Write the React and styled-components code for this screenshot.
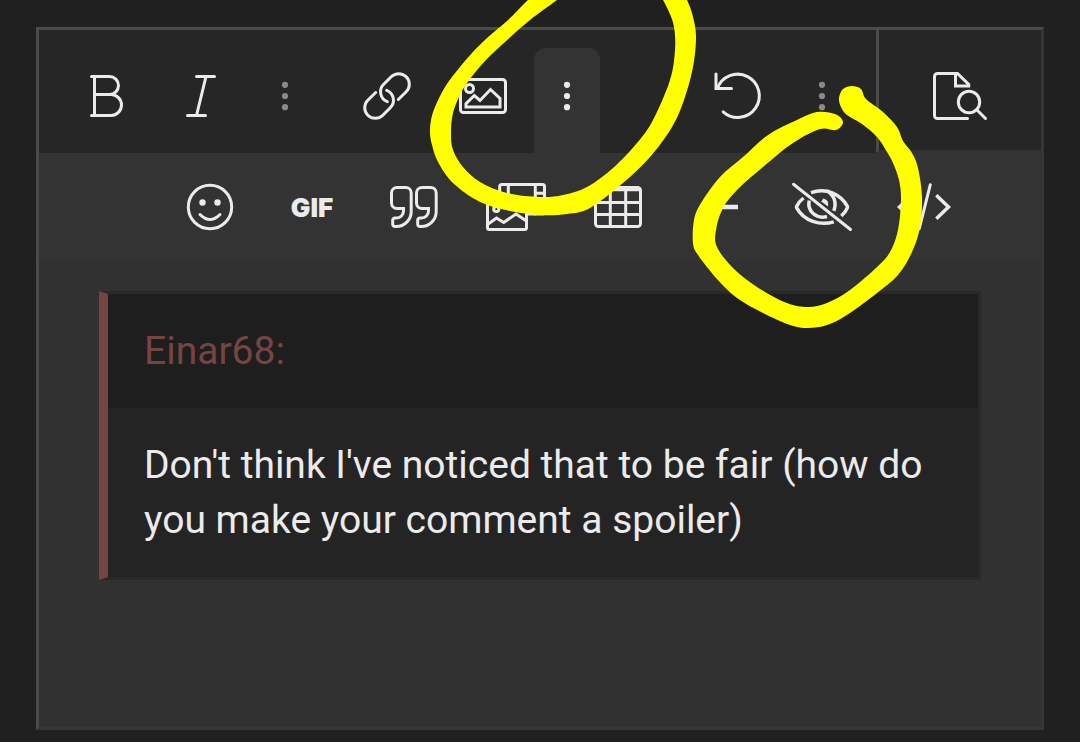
import React from "react"
import styled, { createGlobalStyle } from "styled-components"

const colors = {
  page: "#202020",
  toolbar: "#262626",
  raised: "#333333",
  content: "#313131",
  borderLight: "#4b4b4b",
  borderHeavy: "#363636",
  icon: "#ebebeb",
  muted: "#8a8a8a",
  accent: "#774541",
  marker: "#ffff00",
}

export default function App() {
  return (
    <Page>
      <GlobalStyle />
      <Editor>
        <Toolbar role="toolbar" aria-label="Formatting">
          <Group>
            <ToolButton label="Bold">
              <path d="M-13.5 -19.5H4.5A9 9 0 0 1 4.5 -1.5H-10.5M4.5 -1.5H6A10.5 10.5 0 0 1 6 19.5H-13.5M-10.5 -19.5V19.5" />
            </ToolButton>
            <ToolButton label="Italic">
              <path d="M-4.5 -19.5H13.5M-13.5 19.5H4.5M5 -19.5L-4.5 19.5" />
            </ToolButton>
            <MoreButton label="More text options" muted />
          </Group>
          <Group>
            <ToolButton label="Insert link">
              <path d="M-11.3 -3.5L-19.2 4.2A10.6 10.6 0 0 0 -4.2 19.2L3.3 11.7A10.6 10.6 0 0 0 -0.3 -5.7" />
              <path d="M11.3 3.5L19.2 -4.2A10.6 10.6 0 0 0 4.2 -19.2L-3.3 -11.7A10.6 10.6 0 0 0 0.3 5.7" />
            </ToolButton>
            <ToolButton label="Insert image">
              <rect x="-22.5" y="-16.5" width="45" height="33" rx="3" />
              <circle cx="-13.5" cy="-7.5" r="4" />
              <path d="M-17 11V7.7L-8.7 -0.5L-3 4.5L7.5 -6.5L17 2.5V11Z" />
            </ToolButton>
            <MoreButton label="More rich options" active />
          </Group>
          <Group $end>
            <ToolButton label="Undo">
              <path d="M-14.8 15.8A21.6 21.6 0 1 0 -20.6 -7.5" />
              <path d="M-22 -22V-7.5H-6.5" />
            </ToolButton>
            <MoreButton label="More options" muted />
          </Group>
          <PreviewGroup>
            <ToolButton label="Preview">
              <path d="M7.5 22.5H-22.5A3 3 0 0 1 -25.5 19.5V-19.5A3 3 0 0 1 -22.5 -22.5H-2.5L8.7 -11.5V-10H-4.5V-22.5" />
              <circle cx="9" cy="6" r="10.7" />
              <path d="M17.5 14.5L25.5 22.5" />
            </ToolButton>
          </PreviewGroup>
        </Toolbar>

        <MoreBar role="toolbar" aria-label="More rich options">
          <ToolButton label="Smilies">
            <circle r="21.7" />
            <g fill="currentColor" stroke="none">
              <circle cx="-7.5" cy="-4.5" r="3.2" />
              <circle cx="7.5" cy="-4.5" r="3.2" />
            </g>
            <path d="M-10 7.5Q0 17.5 10 7.5" />
          </ToolButton>
          <Button type="button">
            <GifText>GIF</GifText>
          </Button>
          <ToolButton label="Quote">
            <path d={quoteMark} />
            <path d={quoteMark} transform="translate(25 0)" />
          </ToolButton>
          <ToolButton label="Media">
            <path d="M-16.3 -8V-20.5A2 2 0 0 1 -14.3 -22.5H26.5A2 2 0 0 1 28.5 -20.5V5A2 2 0 0 1 26.5 7H11" />
            <path d="M-7.7 -22V-8M19.3 -22V7M19.3 -13.7H28.5M19.3 -3.5H28.5" />
            <rect x="-28.5" y="-7.5" width="39" height="30" rx="2" />
            <circle cx="-19.7" cy="2" r="2.6" />
            <path d="M-28.5 17.5L-19.5 11L-12.3 15.5L0 7L10.5 14" />
          </ToolButton>
          <ToolButton label="Insert table">
            <rect x="-22.5" y="-19.5" width="45" height="39" rx="3" />
            <path d="M-22 -17.2H22M-22 -4.6H22M-22 7.4H22M-7.7 -18V19M7.7 -18V19" />
          </ToolButton>
          <ToolButton label="Insert horizontal line">
            <path d="M-18 0H18" strokeWidth="4.5" strokeLinecap="butt" />
          </ToolButton>
          <ToolButton label="Inline spoiler">
            <path d="M-28.5 -22.7L28.5 22.5" />
            <g strokeLinecap="butt" strokeWidth="3.5">
              <path d="M-18.5 -9Q-23.5 -5 -25.3 -0.8Q-25.8 0 -25.3 0.8C-18 14 -2 19 11.8 14.8" />
              <path d="M-11 -14.3C5 -20 19 -12 25.3 -0.8Q25.8 0 25.3 0.8Q23.5 5.2 19.3 9" />
              <path d="M-12.8 -6.5C-15 4 -6 12.5 5 9.5" />
              <path d="M5 -16.3C12 -12 15 -4.5 11.8 3.8" />
            </g>
            <path d="M1 -8.5Q7.5 -7.5 6 -0.5L-1 -5.8Q0.8 -6.3 1 -8.5Z" fill="currentColor" stroke="none" />
          </ToolButton>
          <ToolButton label="Toggle BB code">
            <path strokeLinecap="butt" strokeWidth="3.5" d="M-12.3 -11.8L-24.5 0L-12.3 11.8M12.3 -11.8L24.5 0L12.3 11.8" />
            <path d="M6.3 -22.3L-4.8 22" />
          </ToolButton>
        </MoreBar>

        <Content
          role="textbox"
          aria-label="Message"
          contentEditable
          suppressContentEditableWarning
          spellCheck={false}
        >
          <Quote>
            <QuoteTitle>Einar68:</QuoteTitle>
            <QuoteText>
              Don't think I've noticed that to be fair (how do you make your
              comment a spoiler)
            </QuoteText>
          </Quote>
        </Content>
      </Editor>
      <Marker />
    </Page>
  )
}

function ToolButton({ label, children }) {
  return (
    <Button type="button" aria-label={label}>
      <Icon viewBox="-33 -27 66 54" aria-hidden="true">
        {children}
      </Icon>
    </Button>
  )
}

function MoreButton({ label, muted, active }) {
  return (
    <MoreToggle
      type="button"
      aria-label={label}
      aria-expanded={!!active}
      $muted={muted}
      $active={active}
    >
      <Icon viewBox="-33 -27 66 54" aria-hidden="true">
        <g fill="currentColor" stroke="none">
          <circle cy="-11.2" r="3.1" />
          <circle r="3.1" />
          <circle cy="11.2" r="3.1" />
        </g>
      </Icon>
    </MoreToggle>
  )
}

const quoteMark =
  "M-17 -19.5H-8.3A5.5 5.5 0 0 1 -2.8 -14V4.5A15 15 0 0 1 -17.8 19.5H-19A2.3 2.3 0 0 1 -21.3 17.2V13.3A2.3 2.3 0 0 1 -19 11H-17.5A7 7 0 0 0 -10.5 4V1.5H-17A5.5 5.5 0 0 1 -22.5 -4V-14A5.5 5.5 0 0 1 -17 -19.5Z"

// outlines of the two hand drawn circles, x y pairs
const upperCircle = [
  [528, 0], [507, 21], [487, 38], [472, 53], [460, 67], [445, 87], [435, 107],
  [431, 120], [430, 133], [432, 145], [438, 162], [453, 183], [480, 202],
  [510, 211], [540, 215], [567, 214], [590, 208], [623, 183], [650, 157],
  [672, 127], [684, 100], [693, 67], [696, 37], [693, 17], [687, 0],
  [675, -20], [655, -14], [663, 0], [669, 12], [674, 27], [675, 50], [670, 80],
  [653, 120], [637, 143], [613, 168], [587, 187], [563, 195], [540, 197],
  [507, 193], [480, 182], [463, 167], [453, 150], [451, 133], [453, 113],
  [461, 93], [470, 79], [486, 60], [505, 42], [530, 20], [557, 0], [572, -12],
  [548, -18],
]

const lowerCircle = [
  [839, 98], [843, 89], [852, 86], [861, 89], [866, 99], [883, 112], [897, 127],
  [903, 141], [912, 153], [918, 168], [922, 197], [920, 227], [912, 252],
  [898, 275], [877, 293], [847, 315], [827, 325], [808, 328], [790, 325],
  [763, 313], [737, 298], [717, 279], [698, 255], [693, 243], [694, 220],
  [701, 203], [720, 177], [743, 157], [768, 135], [797, 120], [817, 112],
  [835, 114], [843, 122], [836, 130], [820, 129], [793, 143], [763, 167],
  [738, 189], [723, 208], [716, 230], [717, 247], [733, 268], [757, 287],
  [787, 303], [808, 307], [827, 303], [850, 290], [877, 267], [890, 252],
  [898, 230], [901, 200], [899, 180], [893, 163], [887, 152], [877, 137],
  [862, 124], [847, 115], [841, 107],
]

// closed Catmull-Rom curve through the points
function smooth(points) {
  const n = points.length
  let d = `M${points[0].join(" ")}`
  for (let i = 0; i < n; i++) {
    const a = points[(i - 1 + n) % n]
    const b = points[i]
    const c = points[(i + 1) % n]
    const e = points[(i + 2) % n]
    d += `C${b[0] + (c[0] - a[0]) / 6} ${b[1] + (c[1] - a[1]) / 6} `
    d += `${c[0] - (e[0] - b[0]) / 6} ${c[1] - (e[1] - b[1]) / 6} ${c[0]} ${c[1]}`
  }
  return d + "Z"
}

function Marker() {
  return (
    <MarkerLayer width="1080" height="742" aria-hidden="true">
      <path d={smooth(upperCircle)} />
      <path d={smooth(lowerCircle)} />
    </MarkerLayer>
  )
}

const GlobalStyle = createGlobalStyle`
  * {
    box-sizing: border-box;
  }

  body {
    margin: 0;
    background: ${colors.page};
    font-family: Roboto, "Liberation Sans", sans-serif;
  }
`

const Page = styled.main`
  position: relative;
  overflow: hidden;
  padding: 27px 36px 12px;
`

const Editor = styled.div`
  border: 3px solid;
  border-color: ${colors.borderLight} ${colors.borderHeavy}
    ${colors.borderHeavy} ${colors.borderLight};
  background: ${colors.content};
`

const Toolbar = styled.div`
  display: flex;
  background: ${colors.toolbar};
`

const Group = styled.div`
  display: flex;
  margin-left: ${(props) => (props.$end ? "auto" : "0")};
  padding: 18px ${(props) => (props.$end ? "21px" : "3px")} 0 18px;
`

const PreviewGroup = styled.div`
  display: flex;
  padding: 18px 33px 0;
  border-left: 3px solid ${colors.borderLight};
  border-bottom: 3px solid ${colors.raised};
`

const Button = styled.button`
  display: flex;
  align-items: center;
  justify-content: center;
  width: 96px;
  height: 96px;
  padding: 0;
  border: 0;
  background: none;
  color: ${colors.icon};
  cursor: pointer;
`

const MoreToggle = styled(Button)`
  width: 66px;
  height: 105px;
  margin-left: 3px;
  padding-bottom: 9px;
  border-radius: 12px 12px 0 0;
  background: ${(props) => (props.$active ? colors.raised : "none")};
  color: ${(props) => (props.$muted ? colors.muted : colors.icon)};
`

const Icon = styled.svg`
  width: 66px;
  height: 54px;
  flex-shrink: 0;
  fill: none;
  stroke: currentColor;
  stroke-width: 3px;
  stroke-linecap: round;
`

const GifText = styled.span`
  font-family: Inter, sans-serif;
  font-size: 26px;
  font-weight: 900;
`

const MoreBar = styled.div`
  display: flex;
  justify-content: center;
  gap: 6px;
  padding: 6px 0 6px 54px;
  background: ${colors.raised};
`

const Content = styled.div`
  min-height: 466px;
  padding: 30px 60px;
  outline: none;
`

const Quote = styled.blockquote`
  margin: 0;
  border: 3px solid #292929;
  border-left: 9px solid ${colors.accent};
  background: #242424;
  font-size: 39px;
  line-height: 55px;
`

const QuoteTitle = styled.div`
  padding: 30px 36px 29px;
  background: #1e1e1e;
  color: ${colors.accent};
`

const QuoteText = styled.div`
  padding: 30px 36px 29px;
  color: ${colors.icon};
`

const MarkerLayer = styled.svg`
  position: absolute;
  top: 0;
  left: 0;
  fill: ${colors.marker};
  pointer-events: none;
`
